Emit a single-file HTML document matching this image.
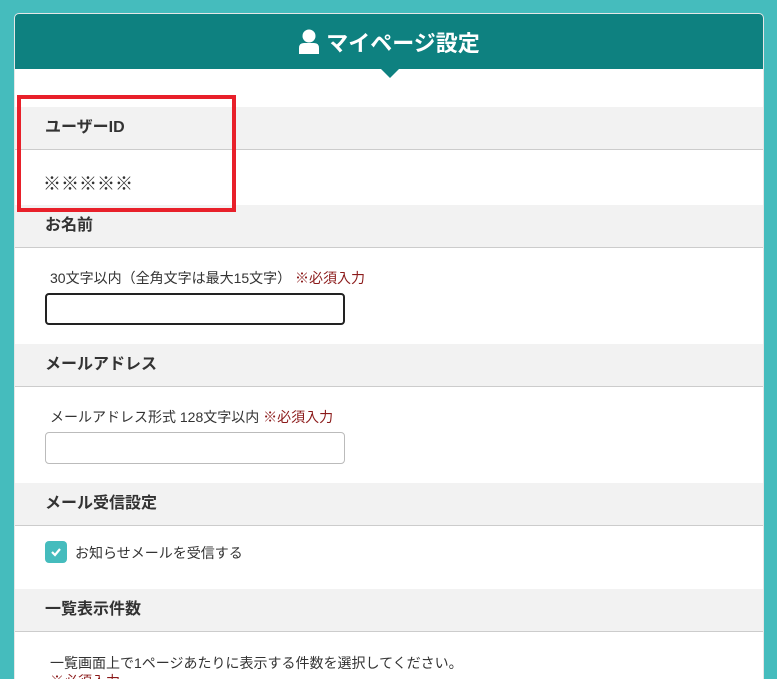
<!DOCTYPE html>
<html style="width:777px;height:679px;overflow:hidden"><head><meta charset="utf-8"><style>
*{margin:0;padding:0;box-sizing:border-box}
body{width:777px;height:679px;overflow:hidden;background:#45bcbd;font-family:"Liberation Sans","Noto Sans CJK JP",sans-serif;color:#333;position:relative}
.card{position:absolute;left:14px;top:13px;width:750px;height:666px;background:#fff;border-radius:5px 5px 0 0;overflow:hidden;border:1px solid #e6e6e6;border-bottom:0}
.hd{position:absolute;left:0;top:0;width:100%;height:55px;background:#0e8180;color:#fff;font-weight:bold;font-size:22px;display:flex;align-items:center;justify-content:center}
.tri{position:absolute;left:365px;top:54px;width:0;height:0;border-left:10px solid transparent;border-right:10px solid transparent;border-top:10px solid #0e8180}
.sec{position:absolute;left:0;width:100%;height:43px;background:#f2f2f2;border-bottom:1px solid #ccc;font-weight:bold;font-size:16px;padding-left:30px;line-height:42px}
.t{position:absolute;font-size:14px;color:#333}
.r{color:#8b1a1a}
.in{position:absolute;left:30px;width:300px;height:32px;border-radius:4px;background:#fff}
.box{position:absolute;left:17px;top:95px;width:219px;height:117px;border:4px solid #e8202a}
</style></head><body>
<div class="card">
<div class="hd"><svg width="22" height="26" viewBox="0 0 22 26" style="margin-right:6px"><circle cx="11" cy="7" r="6.5" fill="#fff"/><path d="M1 25 V19 Q1 14 6 14 H16 Q21 14 21 19 V25 Z" fill="#fff"/></svg>マイページ設定</div>
<div class="tri"></div>
<div class="sec" style="top:93px">ユーザーID</div>
<div class="t" style="left:28px;top:156px;font-size:18px">※※※※※</div>
<div class="sec" style="top:191px">お名前</div>
<div class="t" style="left:35px;top:254px">30文字以内（全角文字は最大15文字） <span class="r">※必須入力</span></div>
<div class="in" style="top:279px;border:2px solid #222"></div>
<div class="sec" style="top:330px">メールアドレス</div>
<div class="t" style="left:35px;top:393px">メールアドレス形式 128文字以内 <span class="r">※必須入力</span></div>
<div class="in" style="top:418px;border:1px solid #bbb"></div>
<div class="sec" style="top:469px">メール受信設定</div>
<div style="position:absolute;left:30px;top:527px;width:22px;height:22px;background:#45bcbd;border-radius:4px"><svg width="22" height="22" viewBox="0 0 22 22"><path d="M7 11 L10 14 L15 8" stroke="#fff" stroke-width="2.2" fill="none"/></svg></div>
<div class="t" style="left:60px;top:529px">お知らせメールを受信する</div>
<div class="sec" style="top:575px">一覧表示件数</div>
<div class="t" style="left:35px;top:639px">一覧画面上で1ページあたりに表示する件数を選択してください。</div>
<div class="t r" style="left:35px;top:657px">※必須入力</div>
</div>
<div class="box"></div>
</body></html>
